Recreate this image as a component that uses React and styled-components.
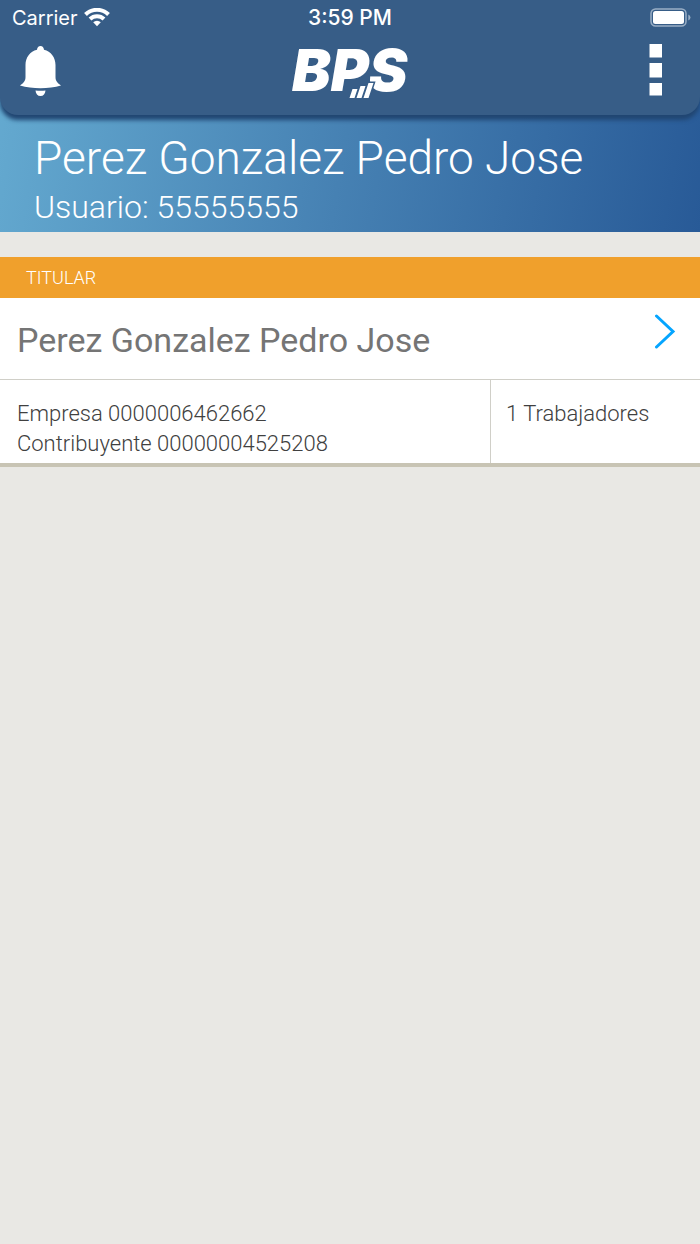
import React from "react";
import styled, { createGlobalStyle } from "styled-components";

const GlobalStyle = createGlobalStyle`
  * { box-sizing: border-box; }
  body {
    margin: 0;
    background: #e9e8e4;
    font-family: Roboto, "Liberation Sans", sans-serif;
  }
`;

const Top = styled.div`
  background: linear-gradient(100deg, #65abd1 0%, #4681b3 50%, #285a97 100%);
`;

const Header = styled.header`
  height: 115px;
  background: #375d87;
  border-radius: 0 0 18px 18px;
  box-shadow: 0 5px 4px #214672;
`;

const StatusBar = styled.div`
  display: grid;
  grid-template-columns: 1fr auto 1fr;
  align-items: center;
  height: 36px;
  padding: 0 9px;
  color: #fff;
  font: 400 20px/36px Inter, "Liberation Sans", sans-serif;
`;

const Carrier = styled.div`
  display: flex;
  align-items: center;
  gap: 6px;
  padding-left: 3px;
`;

const Time = styled.time`
  font-size: 21px;
  font-weight: 500;
`;

const Battery = styled.svg`
  justify-self: end;
`;

const NavBar = styled.nav`
  display: grid;
  grid-template-columns: 1fr auto 1fr;
  padding: 6px 18px 0;
`;

const IconButton = styled.button`
  display: block;
  height: 56px;
  padding: 0 ${(p) => (p.$side === "end" ? "18px" : "0")} 0 0;
  border: 0;
  background: none;
  color: #fff;
  cursor: pointer;
  justify-self: ${(p) => p.$side};
`;

const Logo = styled.svg`
  display: block;
  overflow: visible;
  font: italic 900 58px Inter, "Liberation Sans", sans-serif;
`;

const User = styled.section`
  height: 117px;
  padding: 15px 34px 0;
  color: #fff;
  font-weight: 300;
`;

const UserName = styled.h1`
  margin: 0;
  font-size: 46px;
  line-height: 56px;
  font-weight: 300;
`;

const UserId = styled.p`
  margin: 0;
  font-size: 32px;
  line-height: 42px;
`;

const Section = styled.section`
  margin-top: 25px;
`;

const SectionTitle = styled.h2`
  margin: 0;
  padding: 0 26px;
  background: #f0a02c;
  color: #fff;
  font-size: 18px;
  line-height: 41px;
  font-weight: 300;
`;

const Card = styled.article`
  background: #fff;
  border-bottom: 4px solid #c8c4b4;
`;

const CardLink = styled.a`
  display: flex;
  justify-content: space-between;
  height: 82px;
  padding: 0 24px 0 17px;
  border-bottom: 1px solid #d0cfc8;
  color: #757575;
  font-size: 34px;
  line-height: 84px;
  text-decoration: none;
`;

const Chevron = styled.svg`
  margin-top: 15px;
`;

const Details = styled.div`
  display: grid;
  grid-template-columns: 7fr 3fr;
  color: #404040;
  font-size: 22px;
  line-height: 30px;
  font-weight: 300;
`;

const Detail = styled.div`
  min-height: 83px;
  padding: 19px 14px 4px ${(p) => (p.$divided ? "15px" : "17px")};
  border-left: ${(p) => (p.$divided ? "1px solid #d0cfc8" : "0")};
`;

export default function App() {
  return (
    <>
      <GlobalStyle />
      <Top>
        <Header>
          <StatusBar>
            <Carrier>
              Carrier
              <svg width="26" height="20" viewBox="0 0 26 20" fill="none" stroke="#fff" strokeWidth="4" aria-hidden="true">
                <path d="M1.500 6.500a16.400 16.400 0 0 1 23 0M6 11a10 10 0 0 1 14 0" />
                <path d="M9.200 14.200a5.400 5.400 0 0 1 7.600 0L13 18.200z" fill="#fff" stroke="none" />
              </svg>
            </Carrier>
            <Time>3:59 PM</Time>
            <Battery width="41" height="20" viewBox="0 0 41 20" aria-hidden="true">
              <rect x="1" y="1" width="35" height="17" rx="4.5" fill="none" stroke="#9aafc6" strokeWidth="1.5" />
              <rect x="3" y="3" width="31" height="13" rx="2.5" fill="#fff" />
              <path d="M38.300 6.500q2.200 1 2.200 3t-2.200 3z" fill="#9aafc6" />
            </Battery>
          </StatusBar>
          <NavBar>
            <IconButton $side="start" aria-label="Notificaciones">
              <svg width="44" height="56" viewBox="0 0 44 56" fill="currentColor">
                <path d="M22.500 4c2 0 3.300 1.500 3.500 3.800C33 9.500 37.500 15.500 37.500 23v12c0 4 2 6 5.500 8.500-12.500 3.600-28.500 3.600-41 0C5.500 41 7.500 39 7.500 35V23c0-7.500 4.500-13.500 11.500-15.200C19.200 5.500 20.500 4 22.500 4z" />
                <path d="M17.500 48.500q5 .6 10 0c-.3 3.500-2 5.500-5 5.500s-4.700-2-5-5.500z" />
              </svg>
            </IconButton>
            <Logo width="118" height="60" viewBox="0 0 118 60" role="img" aria-label="BPS">
              <text x="1" y="49" fill="#fff">BPS</text>
              <path
                d="M61.500 47h5l-3 9h-5zM69.500 44h5l-4 12h-5zM77.500 41h5l-5 15h-5z"
                fill="#fff"
                stroke="#375d87"
                strokeWidth="3"
                paintOrder="stroke"
              />
            </Logo>
            <IconButton $side="end" aria-label="Menú">
              <svg width="16" height="56" viewBox="0 0 16 56" fill="currentColor">
                <path d="M1.500 2H14v13.500H1.500zM1.500 21H14v14.500H1.500zM1.500 41H14v12.500H1.500z" />
              </svg>
            </IconButton>
          </NavBar>
        </Header>
        <User>
          <UserName>Perez Gonzalez Pedro Jose</UserName>
          <UserId>Usuario: 55555555</UserId>
        </User>
      </Top>
      <Section>
        <SectionTitle>TITULAR</SectionTitle>
        <Card>
          <CardLink href="#empresa">
            Perez Gonzalez Pedro Jose
            <Chevron width="22" height="36" viewBox="0 0 22 36" fill="none" stroke="#05a5ff" strokeWidth="3" strokeLinecap="round" aria-hidden="true">
              <path d="M2.500 3L19 18.500L2.500 34" />
            </Chevron>
          </CardLink>
          <Details>
            <Detail>
              Empresa 0000006462662
              <br />
              Contribuyente 00000004525208
            </Detail>
            <Detail $divided>1 Trabajadores</Detail>
          </Details>
        </Card>
      </Section>
    </>
  );
}
